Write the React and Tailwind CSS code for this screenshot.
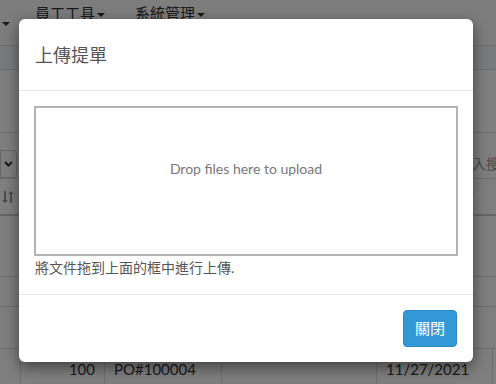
import React from 'react';

const font = { fontFamily: 'Lato, "Noto Sans CJK TC", sans-serif' };

const Caret = () => (
    <span className="inline-block ml-[2px] align-middle w-0 h-0 border-l-[4px] border-r-[4px] border-t-[4px] border-l-transparent border-r-transparent border-t-[#333]" />
);

const SortIcon = () => (
    <svg width="12" height="14" viewBox="0 0 12 14" fill="#999">
        <path d="M2 1h2v9h2l-3 3-3-3h2z" />
        <path d="M8 13h2V4h2L9 1 6 4h2z" />
    </svg>
);

const App = () => {
    return (
        <div className="relative w-[496px] h-[384px] overflow-hidden bg-white text-[#333]" style={font}>
            {/* page underneath */}
            <div className="h-[46px] border-b border-[#ddd] bg-[#fafafa] flex items-start text-[15px]">
                <div className="w-[4px] mt-[11px]"><Caret /></div>
                <div className="ml-[31px] leading-[26px]">員工工具<Caret /></div>
                <div className="ml-[30px] leading-[26px]">系統管理<Caret /></div>
            </div>
            <div className="h-[24px] border-b border-[#d5dde5] bg-[#f2f6fa]" />
            <div className="h-[63px] border-b border-[#ddd]" />
            <div className="h-[45px] flex items-end justify-between">
                <div className="w-[17px] h-[28px] border border-[#ccc] rounded-r-[4px] flex items-center justify-center">
                    <svg width="9" height="6" viewBox="0 0 9 6"><path d="M1 1l3.5 3.5L8 1" stroke="#333" strokeWidth="2" fill="none" /></svg>
                </div>
                <div className="h-[28px] w-[24px] text-[14px] text-[#999] leading-[28px] overflow-hidden whitespace-nowrap">入搜</div>
            </div>
            <div className="border-t border-[#ddd]">
                <div className="h-[37px] border-b-2 border-[#ccc] flex items-center justify-between px-[2px]">
                    <SortIcon />
                    <div className="mr-[20px]"><SortIcon /></div>
                </div>
                <div className="h-[61px] border-b border-[#ddd]" />
                <div className="h-[30px] border-b border-[#ddd]" />
                <div className="h-[42px] border-b border-[#ddd]" />
                <div className="flex h-[40px] text-[15px] text-[#333]">
                    <div className="w-[21px] border-r border-[#ddd]" />
                    <div className="w-[84px] border-r border-[#ddd] text-right pr-[9px] pt-[9px]">100</div>
                    <div className="w-[117px] border-r border-[#ddd] pl-[9px] pt-[9px]">PO#100004</div>
                    <div className="w-[155px] border-r border-[#ddd]" />
                    <div className="w-[116px] border-r border-[#ddd] pl-[9px] pt-[9px]">11/27/2021</div>
                </div>
            </div>

            {/* overlay + modal */}
            <div className="absolute inset-0 bg-black/50">
                <div className="ml-[19px] mt-[19px] w-[454px] bg-white rounded-[6px] shadow-[0_5px_15px_rgba(0,0,0,0.5)]">
                    <div className="h-[72px] border-b border-[#e5e5e5] flex items-center px-[16px]">
                        <h4 className="text-[18px] text-[#555] leading-none">上傳提單</h4>
                    </div>
                    <div className="px-[15px] pt-[15px] pb-[16px]">
                        <div className="h-[150px] border-2 border-[#b3b3b3] flex items-center justify-center">
                            <span className="text-[14px] text-[#777] -mt-[26px]">Drop files here to upload</span>
                        </div>
                        <p className="mt-[2px] text-[14px] text-[#555] leading-[20px] pl-[1px]">將文件拖到上面的框中進行上傳.</p>
                    </div>
                    <div className="border-t border-[#e5e5e5] h-[68px] flex items-start justify-end pr-[16px] pt-[15px]">
                        <button className="w-[54px] h-[37px] rounded-[4px] bg-[#3399d6] border border-[#2a8ac9] text-white text-[15px]">關閉</button>
                    </div>
                </div>
            </div>
        </div>
    );
};

export default App;
